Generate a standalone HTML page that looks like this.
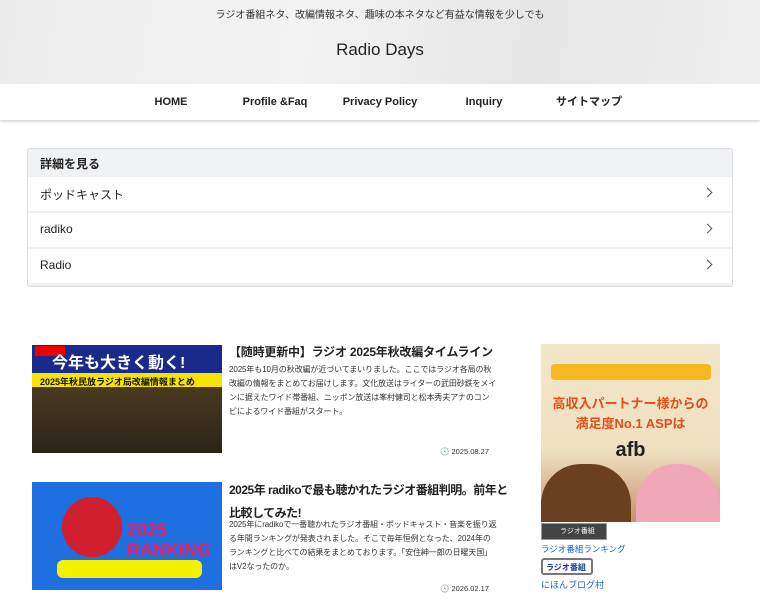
<!DOCTYPE html>
<html><head><meta charset="utf-8"><style>
*{margin:0;padding:0;box-sizing:border-box}
body{width:760px;height:600px;overflow:hidden;background:#fff;font-family:"Liberation Sans","Noto Sans CJK JP",sans-serif;color:#222;position:relative}
.hd{position:absolute;left:0;top:0;width:760px;height:84px;background:linear-gradient(100deg,#ececec,#f3f3f3 40%,#e6e6e6 70%,#efefef)}
.tag{position:absolute;top:6px;width:760px;text-align:center;font-size:10px;color:#333}
.ttl{position:absolute;top:40px;width:760px;text-align:center;font-size:17px;color:#222}
.nav{position:absolute;top:84px;left:0;width:760px;height:36px;background:#fff;box-shadow:0 2px 2px rgba(0,0,0,.15)}
.nav span{position:absolute;top:11px;font-size:11px;font-weight:bold;transform:translateX(-50%);line-height:14px}
.box{position:absolute;left:27px;top:148px;width:706px;height:139px;border:1px solid #dcdde0;border-radius:3px;background:#f0f1f3}
.bh{height:28px;padding:6px 12px;font-size:12px;font-weight:bold}
.row{height:34px;background:#fff;margin-bottom:2px;padding:9px 12px;font-size:12px;position:relative}
.row:after{content:"";position:absolute;right:21px;top:12px;width:6px;height:6px;border-top:1.3px solid #555;border-right:1.3px solid #555;transform:rotate(45deg)}
.img{position:absolute;left:32px;width:190px;height:108px;overflow:hidden}
.pt{position:absolute;left:229px;width:268px;font-size:12px;font-weight:bold;line-height:22px;letter-spacing:-0.2px}
.px{position:absolute;left:229px;width:268px;font-size:8px;line-height:14px;color:#333;letter-spacing:-0.1px}
.dt{position:absolute;left:400px;width:89px;text-align:right;font-size:7.5px;color:#333}
a{color:#1a5fd0}
</style></head><body>
<div class="hd"></div>
<div class="tag">ラジオ番組ネタ、改編情報ネタ、趣味の本ネタなど有益な情報を少しでも</div>
<div class="ttl">Radio Days</div>
<div class="nav"><span style="left:171px">HOME</span><span style="left:275px">Profile &amp;Faq</span><span style="left:380px">Privacy Policy</span><span style="left:484px">Inquiry</span><span style="left:589px">サイトマップ</span></div>
<div class="box"><div class="bh">詳細を見る</div><div class="row">ポッドキャスト</div><div class="row">radiko</div><div class="row">Radio</div></div>

<div class="img" style="top:345px;background:linear-gradient(#1a2a8a 0,#1a2a8a 28px,#f5e400 28px,#f5e400 42px,#4a3a20 42px,#2a2418 100%)">
<div style="position:absolute;left:3px;top:1px;width:30px;height:10px;background:#e00"></div>
<div style="position:absolute;left:20px;top:4px;color:#fff;font-weight:bold;font-size:16px">今年も大きく動く!</div>
<div style="position:absolute;left:8px;top:30px;font-size:9px;font-weight:bold;color:#111">2025年秋民放ラジオ局改編情報まとめ</div>
</div>
<div class="pt" style="top:341px;white-space:nowrap">【随時更新中】ラジオ 2025年秋改編タイムライン</div>
<div class="px" style="top:363px">2025年も10月の秋改編が近づいてまいりました。ここではラジオ各局の秋改編の情報をまとめてお届けします。文化放送はライターの武田砂鉄をメインに据えたワイド帯番組、ニッポン放送は峯村健司と松本秀夫アナのコンビによるワイド番組がスタート。</div>
<div class="dt" style="top:447px">🕓 2025.08.27</div>

<div class="img" style="top:482px;background:#1e6fe0">
<div style="position:absolute;left:30px;top:15px;width:60px;height:60px;border-radius:50%;background:#d02030"></div>
<div style="position:absolute;left:95px;top:38px;color:#e8206a;font-weight:bold;font-size:18px;line-height:20px">2025<br>RANKING</div>
<div style="position:absolute;left:25px;top:78px;width:145px;height:18px;background:#f5f000;border-radius:6px"></div>
</div>
<div class="pt" style="top:479px;line-height:23px;letter-spacing:-0.5px;white-space:nowrap">2025年 radikoで最も聴かれたラジオ番組判明。前年と<br>比較してみた!</div>
<div class="px" style="top:518px">2025年にradikoで一番聴かれたラジオ番組・ポッドキャスト・音楽を振り返る年間ランキングが発表されました。そこで毎年恒例となった、2024年のランキングと比べての結果をまとめております。「安住紳一郎の日曜天国」はV2なったのか。</div>
<div class="dt" style="top:584px">🕓 2026.02.17</div>

<div style="position:absolute;left:541px;top:344px;width:179px;height:178px;background:linear-gradient(#f3e6c8,#efe0c0 60%,#c89070)">
<div style="position:absolute;left:10px;top:20px;width:160px;height:16px;background:#f5b820;border-radius:4px"></div>
<div style="position:absolute;top:50px;width:179px;text-align:center;color:#e0501a;font-weight:bold;font-size:13px;line-height:20px">高収入パートナー様からの<br>満足度No.1 ASPは</div>
<div style="position:absolute;top:95px;width:179px;text-align:center;font-weight:bold;font-size:20px;color:#222">afb</div>
<div style="position:absolute;left:0;top:120px;width:90px;height:58px;background:#6a4020;border-radius:40px 40px 0 0"></div>
<div style="position:absolute;left:95px;top:120px;width:84px;height:58px;background:#f0a8b8;border-radius:40px 40px 0 0"></div>
</div>
<div style="position:absolute;left:541px;top:523px;width:66px;height:17px;background:#444;border:1px solid #999;color:#fff;font-size:7px;padding:2px 0 0 18px">ラジオ番組</div>
<div style="position:absolute;left:541px;top:543px;font-size:8.5px"><a>ラジオ番組ランキング</a></div>
<div style="position:absolute;left:541px;top:558px;width:52px;height:17px;background:#fff;border:2px solid #777;border-radius:3px;font-size:8px;font-weight:bold;color:#1a3c9a;padding:2px 3px">ラジオ番組</div>
<div style="position:absolute;left:541px;top:578px;font-size:9px"><a>にほんブログ村</a></div>
</body></html>
